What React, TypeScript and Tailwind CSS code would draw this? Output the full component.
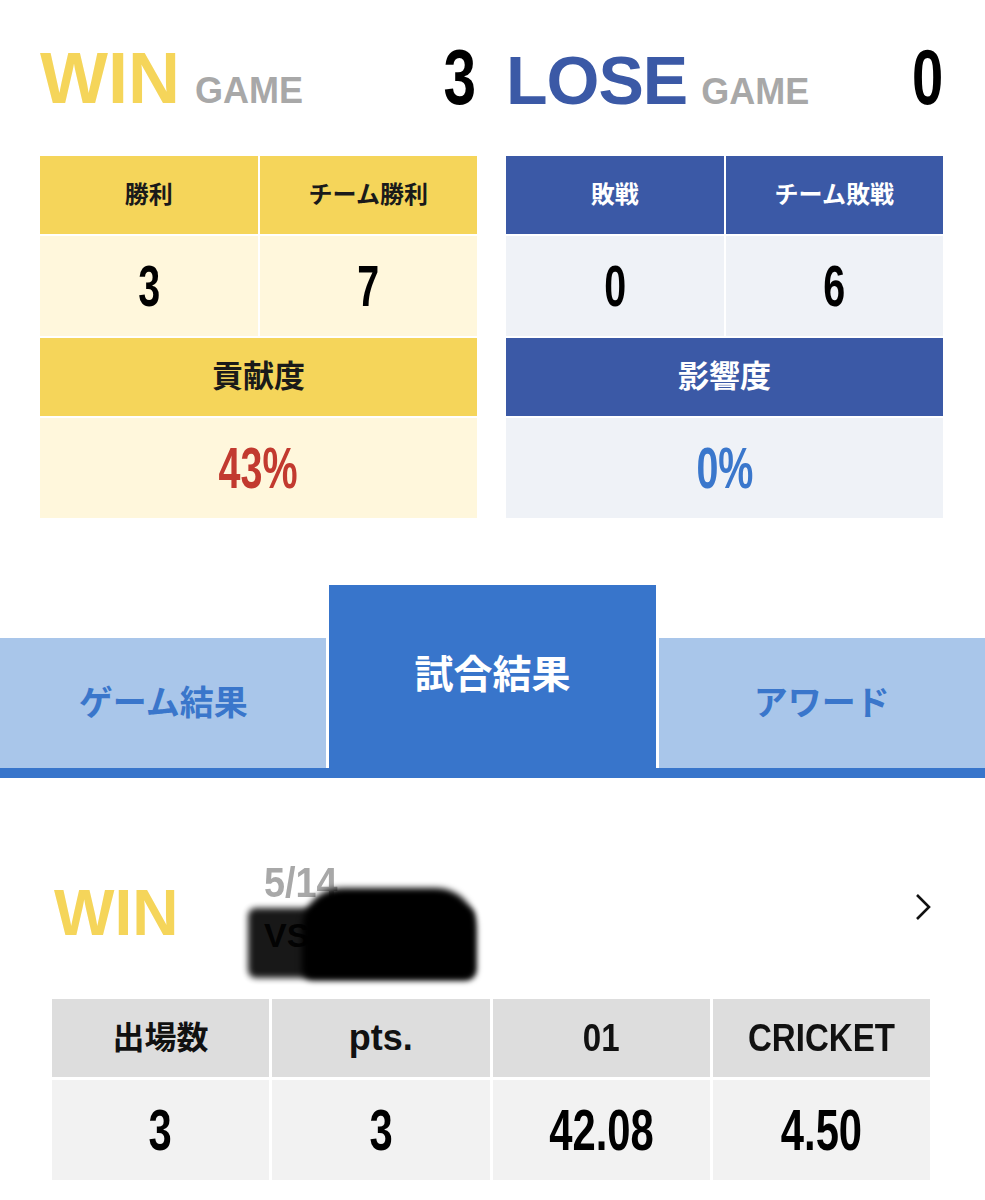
import React from "react";

const JP = '"Liberation Sans", "Noto Sans CJK JP", sans-serif';

// condensed digits: Liberation Sans squeezed horizontally
function Num({ children, className = "" }: { children: React.ReactNode; className?: string }) {
  return <span className={`inline-block origin-center font-bold leading-none ${className}`}>{children}</span>;
}

function StatBlock({
  theme,
  labels,
  values,
  rateLabel,
  rate,
}: {
  theme: "win" | "lose";
  labels: [string, string];
  values: [string, string];
  rateLabel: string;
  rate: string;
}) {
  const head = theme === "win" ? "bg-[#f5d55a] text-[#1a1a1a]" : "bg-[#3b59a6] text-white";
  const cell = theme === "win" ? "bg-[#fff7dc]" : "bg-[#eff2f7]";
  const rateColor = theme === "win" ? "text-[#c23a2f]" : "text-[#3a77cc]";

  return (
    <div className="flex w-[437px] flex-col gap-[2px]">
      <div className="grid grid-cols-2 gap-[2px]">
        {labels.map((l) => (
          <div key={l} className={`flex h-[78px] items-center justify-center text-[24px] font-bold ${head}`}>
            {l}
          </div>
        ))}
        {values.map((v, i) => (
          <div key={i} className={`flex h-[100px] items-center justify-center ${cell}`}>
            <Num className="scale-x-[0.68] text-[58px] text-black">{v}</Num>
          </div>
        ))}
      </div>
      <div className={`flex h-[78px] items-center justify-center text-[31px] font-bold ${head}`}>{rateLabel}</div>
      <div className={`flex h-[100px] items-center justify-center ${cell}`}>
        <Num className={`scale-x-[0.68] text-[58px] ${rateColor}`}>{rate}</Num>
      </div>
    </div>
  );
}

export default function App() {
  return (
    <div className="w-[985px] bg-white pb-[23px]" style={{ fontFamily: JP }}>
      {/* Score header */}
      <div className="flex gap-[29px] px-[40px] pt-[44px]">
        <div className="flex h-[70px] w-[437px] items-end justify-between">
          <div className="flex items-baseline gap-[15px]">
            <span className="text-[72px] font-bold leading-none text-[#f5d55a]">WIN</span>
            <span className="text-[36px] font-bold leading-none text-[#a8a8a8]">GAME</span>
          </div>
          <Num className="mb-[-2px] mr-[-4px] scale-x-[0.75] text-[78px] text-black">3</Num>
        </div>
        <div className="flex h-[70px] w-[437px] items-end justify-between">
          <div className="flex items-baseline gap-[14px]">
            <span className="text-[68px] font-bold leading-none tracking-[-1px] text-[#3b59a6]">LOSE</span>
            <span className="text-[36px] font-bold leading-none text-[#a8a8a8]">GAME</span>
          </div>
          <Num className="mb-[-2px] mr-[-6px] scale-x-[0.72] text-[78px] text-black">0</Num>
        </div>
      </div>

      {/* Stat tables */}
      <div className="mt-[42px] flex gap-[29px] px-[40px]">
        <StatBlock theme="win" labels={["勝利", "チーム勝利"]} values={["3", "7"]} rateLabel="貢献度" rate="43%" />
        <StatBlock theme="lose" labels={["敗戦", "チーム敗戦"]} values={["0", "6"]} rateLabel="影響度" rate="0%" />
      </div>

      {/* Tabs */}
      <div className="mt-[67px]">
        <div className="grid grid-cols-3 items-end gap-[3px]">
          <div className="flex h-[130px] items-center justify-center bg-[#a9c6ea] text-[34px] font-bold text-[#3a76cb]">
            ゲーム結果
          </div>
          <div className="flex h-[183px] items-center justify-center bg-[#3875cb] pb-[2px] text-[39px] font-bold text-white">
            試合結果
          </div>
          <div className="flex h-[130px] items-center justify-center bg-[#a9c6ea] text-[34px] font-bold text-[#3a76cb]">
            アワード
          </div>
        </div>
        <div className="h-[10px] bg-[#3875cb]" />
      </div>

      {/* Match */}
      <div className="pl-[52px] pr-[55px] pt-[84px]">
        <div className="flex h-[137px] items-start">
          <span className="ml-[2px] mt-[19px] w-[194px] text-[64px] font-bold leading-none text-[#f5d55a]">WIN</span>
          <div className="relative flex flex-col">
            <Num className="ml-[16px] origin-left scale-x-[0.9] text-[42px] text-[#a8a8a8]">5/14</Num>
            <span className="ml-[16px] mt-[14px] text-[34px] font-bold leading-none text-[#222]">VS</span>
            {/* redaction marks */}
            <div className="absolute left-0 top-[46px] h-[70px] w-[226px] rounded-[8px] bg-black opacity-90 blur-[3px]" />
            <div className="absolute left-[54px] top-[26px] h-[92px] w-[174px] rounded-b-[10px] rounded-t-[40px] bg-black blur-[3px]" />
          </div>
          <div className="ml-auto mr-[-4px] mt-[30px]">
            <svg width="22" height="30" viewBox="0 0 22 30" fill="none">
              <path d="M5 3 L17 15 L5 27" stroke="#111" strokeWidth="2.6" />
            </svg>
          </div>
        </div>

        <div className="grid grid-cols-4 gap-[3px]">
          <div className="flex h-[78px] items-center justify-center bg-[#dddddd] text-[32px] font-bold text-[#111]">
            出場数
          </div>
          <div className="flex h-[78px] items-center justify-center bg-[#dddddd] text-[36px] font-bold text-[#111]">
            pts.
          </div>
          <div className="flex h-[78px] items-center justify-center bg-[#dddddd]">
            <Num className="scale-x-[0.87] text-[38px] text-[#111]">01</Num>
          </div>
          <div className="flex h-[78px] items-center justify-center bg-[#dddddd]">
            <Num className="scale-x-[0.87] text-[38px] text-[#111]">CRICKET</Num>
          </div>
          {["3", "3", "42.08", "4.50"].map((v, i) => (
            <div key={i} className="flex h-[100px] items-center justify-center bg-[#f2f2f2]">
              <Num className="scale-x-[0.72] text-[58px] text-black">{v}</Num>
            </div>
          ))}
        </div>
      </div>
    </div>
  );
}
